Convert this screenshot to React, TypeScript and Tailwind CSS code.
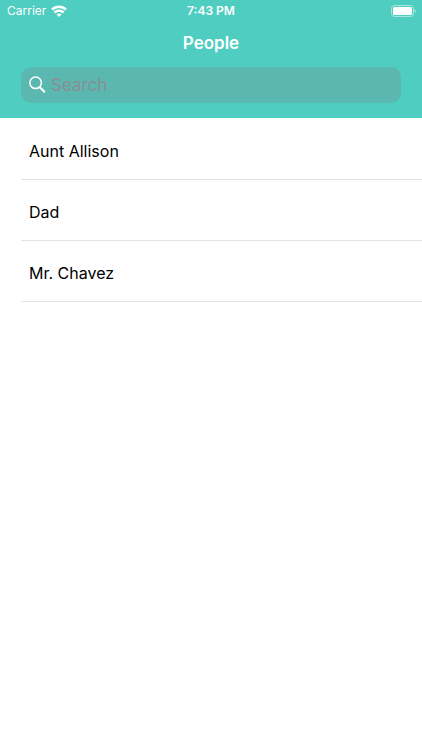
const people = ['Aunt Allison', 'Dad', 'Mr. Chavez'];

function WifiIcon() {
  return (
    <svg aria-hidden="true" className="h-3 w-4" viewBox="0 0 16 12" fill="none" stroke="white" strokeWidth="2.4">
      <path d="M1 4.6C5 .8 11 .8 15 4.6" />
      <path d="M3.4 7.5C6.1 5 9.9 5 12.6 7.5" />
      <path d="M8 11.9 5.5 9.4C7 8.2 9 8.2 10.5 9.4Z" fill="white" stroke="none" />
    </svg>
  );
}

function BatteryIcon() {
  return (
    <svg aria-hidden="true" className="-mr-px h-3 w-[25px]" viewBox="0 0 25 12">
      <rect x="0.5" y="0.5" width="22" height="11" rx="3" fill="none" stroke="white" strokeOpacity="0.5" />
      <rect x="2" y="2" width="19" height="8" rx="1.6" fill="white" />
      <path d="M23.7 4.2v3.6c1.5-.6 1.5-3 0-3.6Z" fill="white" fillOpacity="0.6" />
    </svg>
  );
}

function SearchIcon() {
  return (
    <svg aria-hidden="true" className="h-[18px] w-[18px] shrink-0" viewBox="0 0 18 18" fill="none" stroke="white">
      <circle cx="6.6" cy="6.8" r="5.8" strokeWidth="1.5" />
      <path d="m10.9 11.2 4.4 4.6" strokeWidth="2" strokeLinecap="round" />
    </svg>
  );
}

export default function App() {
  return (
    <div className="min-h-screen bg-white font-[Inter,'Liberation_Sans',sans-serif] text-black">
      <header className="bg-[#4ecdc0] pb-[15px] text-white">
        <div className="grid h-[22px] grid-cols-3 items-center px-[7px] text-xs">
          <div className="flex items-center gap-[5px]">
            <span>Carrier</span>
            <WifiIcon />
          </div>
          <time className="text-center font-semibold">7:43 PM</time>
          <div className="flex justify-end">
            <BatteryIcon />
          </div>
        </div>
        <h1 className="flex h-[45px] items-center justify-center pb-0.5 text-[17px] font-semibold">People</h1>
        <label className="mx-[21px] flex h-9 items-center gap-1 rounded-[10px] bg-[#5bb8b1] px-2">
          <SearchIcon />
          <input
            type="search"
            aria-label="Search"
            placeholder="Search"
            className="min-w-0 flex-1 bg-transparent pt-0.5 text-[17px] text-white outline-none placeholder:text-[#8a8e93]"
          />
        </label>
      </header>
      <ul className="pt-px pl-[21px]">
        {people.map((name) => (
          <li key={name} className="flex h-[61px] items-center border-b border-[#e3e3e4] px-2 pt-1 text-base">
            {name}
          </li>
        ))}
      </ul>
    </div>
  );
}
